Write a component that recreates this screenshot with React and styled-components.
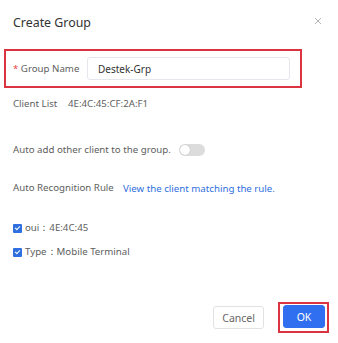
import React from 'react';
import styled, { createGlobalStyle } from 'styled-components';

const GlobalStyle = createGlobalStyle`
  html, body {
    margin: 0;
    padding: 0;
    background: #fff;
  }
  body {
    font-family: "Noto Sans", "Liberation Sans", sans-serif;
    -webkit-font-smoothing: antialiased;
  }
`;

export default function App() {
  return (
    <>
      <GlobalStyle />
      <Dialog>
        <Header>
          <Title>Create Group</Title>
          <Close aria-label="close">
            <svg width="8" height="8" viewBox="0 0 8 8">
              <path d="M1 1L7 7M7 1L1 7" stroke="#b5b5b5" strokeWidth="1" />
            </svg>
          </Close>
        </Header>

        <Body>
          <Highlight>
            <Label $w={74}>
              <Required>*</Required> Group Name
            </Label>
            <Input defaultValue="Destek-Grp" />
          </Highlight>

          <Row $mt={8}>
            <Label $w={55}>Client List</Label>
            <Value>4E:4C:45:CF:2A:F1</Value>
          </Row>

          <Row $mt={30}>
            <Label>Auto add other client to the group.</Label>
            <Toggle>
              <Knob />
            </Toggle>
          </Row>

          <Row $mt={22}>
            <Label $w={110}>Auto Recognition Rule</Label>
            <LinkText href="#">View the client matching the rule.</LinkText>
          </Row>

          <Row $mt={24}>
            <Check>
              <CheckMark />
            </Check>
            <Value>oui：4E:4C:45</Value>
          </Row>

          <Row $mt={8}>
            <Check>
              <CheckMark />
            </Check>
            <Value>Type：Mobile Terminal</Value>
          </Row>
        </Body>

        <Footer>
          <Button>Cancel</Button>
          <Outline>
            <Button $primary>OK</Button>
          </Outline>
        </Footer>
      </Dialog>
    </>
  );
}

const Dialog = styled.div`
  width: 338px;
  height: 343px;
  display: flex;
  flex-direction: column;
  box-sizing: border-box;
  overflow: hidden;
`;

const Header = styled.div`
  display: flex;
  align-items: center;
  justify-content: space-between;
  padding: 13px 16px 0 13px;
  height: 20px;
`;

const Title = styled.div`
  font-size: 12.4px;
  color: #333;
  line-height: 20px;
`;

const Close = styled.span`
  display: flex;
  margin-top: -5px;
`;

const Body = styled.div`
  display: flex;
  flex-direction: column;
  padding: 0 13px;
`;

const Highlight = styled.div`
  margin: 16px 0 0 -9px;
  width: 298px;
  height: 39px;
  box-sizing: border-box;
  border: 2px solid #d9343f;
  display: flex;
  align-items: center;
  padding: 0 10px 0 7px;
`;

const Label = styled.span`
  font-size: 9.7px;
  color: #606060;
  line-height: 16px;
  white-space: nowrap;
  width: ${(p) => (p.$w ? `${p.$w}px` : 'auto')};
  flex: none;
`;

const Required = styled.span`
  color: #e5484d;
`;

const Input = styled.input`
  flex: 1;
  height: 23px;
  box-sizing: border-box;
  border: 1px solid #e4e7ec;
  border-radius: 3px;
  padding: 0 10px;
  font-family: inherit;
  font-size: 10px;
  color: #333;
  outline: none;
`;

const Row = styled.div`
  display: flex;
  align-items: center;
  height: 16px;
  margin-top: ${(p) => p.$mt}px;
`;

const Value = styled.span`
  font-size: 9.7px;
  color: #606060;
  line-height: 16px;
  white-space: nowrap;
`;

const LinkText = styled.a`
  font-size: 9.7px;
  color: #2f6fe0;
  text-decoration: none;
  white-space: nowrap;
`;

const Toggle = styled.span`
  width: 26px;
  height: 12px;
  border-radius: 6px;
  background: #dcdcdc;
  margin-left: 8px;
  display: flex;
  align-items: center;
  padding: 0 1px;
  box-sizing: border-box;
`;

const Knob = styled.span`
  width: 10px;
  height: 10px;
  border-radius: 50%;
  background: #fff;
  box-shadow: 0 0 1px rgba(0, 0, 0, 0.25);
`;

const Check = styled.span`
  width: 9px;
  height: 9px;
  border-radius: 1px;
  background: #2f6fe0;
  margin-right: 3px;
  display: flex;
  align-items: center;
  justify-content: center;
`;

const CheckMark = styled.span`
  width: 2px;
  height: 4px;
  border: solid #fff;
  border-width: 0 1.3px 1.3px 0;
  transform: rotate(45deg);
  margin-top: -1px;
`;

const Footer = styled.div`
  margin-top: auto;
  display: flex;
  justify-content: flex-end;
  align-items: center;
  gap: 14px;
  padding: 0 9px 10px 0;
`;

const Outline = styled.span`
  display: flex;
  border: 2px solid #d9343f;
  padding: 1px 2px 3px 3px;
`;

const Button = styled.button`
  height: 23px;
  min-width: ${(p) => (p.$primary ? 42 : 50)}px;
  box-sizing: border-box;
  border-radius: 3px;
  border: 1px solid ${(p) => (p.$primary ? '#2f6ff0' : '#e2e2e2')};
  background: ${(p) => (p.$primary ? '#2f6ff0' : '#fff')};
  color: ${(p) => (p.$primary ? '#fff' : '#666')};
  font-family: inherit;
  font-size: 10.5px;
  padding: 0 8px;
  cursor: pointer;
`;
